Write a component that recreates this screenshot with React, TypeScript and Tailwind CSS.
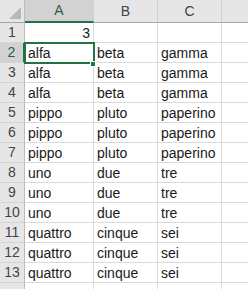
import React from "react";

const rows: string[][] = [
  ["3", "", ""],
  ["alfa", "beta", "gamma"],
  ["alfa", "beta", "gamma"],
  ["alfa", "beta", "gamma"],
  ["pippo", "pluto", "paperino"],
  ["pippo", "pluto", "paperino"],
  ["pippo", "pluto", "paperino"],
  ["uno", "due", "tre"],
  ["uno", "due", "tre"],
  ["uno", "due", "tre"],
  ["quattro", "cinque", "sei"],
  ["quattro", "cinque", "sei"],
  ["quattro", "cinque", "sei"],
];

const cols = ["A", "B", "C"];

const App: React.FC = () => {
  return (
    <div
      className="relative w-[248px] h-[289px] overflow-hidden bg-white text-[14px] text-[#1a1a1a]"
      style={{ fontFamily: '"Liberation Sans", Arial, sans-serif' }}
    >
      <div className="grid grid-cols-[25px_69px_64px_64px_1fr] grid-rows-[23px_repeat(13,20px)_1fr] h-full">
        {/* Corner */}
        <div className="relative bg-[#e6e6e6] border-r border-b border-r-[#bcbcbc] border-b-[#a6a6a6]">
          <div className="absolute right-[3px] bottom-[3px] w-0 h-0 border-l-[12px] border-l-transparent border-b-[12px] border-b-[#b8b8b8]" />
        </div>

        {/* Column headers */}
        {cols.map((c, i) => (
          <div
            key={c}
            className={`flex items-center justify-center border-r border-r-[#cfcfcf] ${
              i === 0
                ? "bg-[#d2d2d2] text-[#2d5e3f] border-b-2 border-b-[#217346]"
                : "bg-[#e6e6e6] text-[#444] border-b border-b-[#a6a6a6]"
            }`}
          >
            {c}
          </div>
        ))}
        <div className="bg-[#e6e6e6] border-b border-b-[#a6a6a6]" />

        {/* Rows */}
        {rows.map((r, ri) => (
          <React.Fragment key={ri}>
            <div
              className={`flex items-center justify-center border-b border-b-[#d4d4d4] ${
                ri === 1
                  ? "bg-[#d2d2d2] text-[#2d5e3f] border-r-2 border-r-[#217346]"
                  : "bg-[#e6e6e6] text-[#444] border-r border-r-[#bcbcbc]"
              }`}
            >
              {ri + 1}
            </div>
            {r.map((v, ci) => (
              <div
                key={ci}
                className={`flex items-center px-[3px] border-r border-b border-[#dadada] whitespace-nowrap leading-none ${
                  ri === 0 && ci === 0 ? "justify-end" : "justify-start"
                }`}
              >
                {v}
              </div>
            ))}
            <div className="border-b border-[#dadada]" />
          </React.Fragment>
        ))}

        {/* Row 14 partial */}
        <div className="bg-[#e6e6e6] border-r border-r-[#bcbcbc]" />
        <div className="border-r border-[#dadada]" />
        <div className="border-r border-[#dadada]" />
        <div className="border-r border-[#dadada]" />
        <div />
      </div>

      {/* Selection around A2 */}
      <div className="absolute left-[24px] top-[42px] w-[71px] h-[22px] border-2 border-[#217346] pointer-events-none" />
      <div className="absolute left-[90px] top-[61px] w-[6px] h-[6px] bg-[#217346] border border-white" />
    </div>
  );
};

export default App;
